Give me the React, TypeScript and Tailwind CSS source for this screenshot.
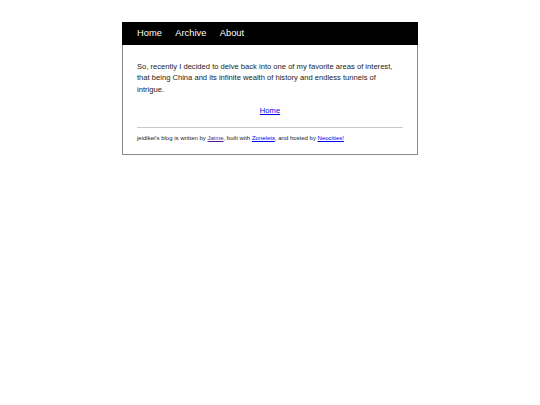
export default function App() {
  const navItems = ["Home", "Archive", "About"]

  return (
    <div className="min-h-screen bg-white pt-[22px] font-['Liberation_Sans',Arial,sans-serif]">
      <div className="mx-auto w-[296px] border border-[#8a8a8a]">
        {/* Nav bar */}
        <nav className="-mx-px -mt-px flex h-[23px] items-center gap-[13.5px] bg-black px-[15px] text-[9.3px] text-white">
          {navItems.map((item) => (
            <a key={item} href="#" className="leading-none">
              {item}
            </a>
          ))}
        </nav>

        <main className="px-[14px] pt-[16px] text-[7.6px] leading-[11.4px] text-[#222]">
          <p>
            So, recently I decided to delve back into one of my favorite areas of interest, that being China and its
            infinite wealth of history and endless tunnels of intrigue.
          </p>
          <p className="mt-[10px] text-center">
            <a href="#" className="text-[#0000ee] underline">
              Home
            </a>
          </p>
        </main>

        <footer className="mx-[14px] mt-[10px] border-t border-[#c8c8c8] pt-[6px] pb-[11px] text-[6px] leading-[9px] text-[#222]">
          jeidikei's blog is written by{" "}
          <a href="#" className="text-[#551a8b] underline">
            Jaime
          </a>
          , built with{" "}
          <a href="#" className="text-[#0000ee] underline">
            Zonelets
          </a>
          , and hosted by{" "}
          <a href="#" className="text-[#0000ee] underline">
            Neocities!
          </a>
        </footer>
      </div>
    </div>
  )
}
